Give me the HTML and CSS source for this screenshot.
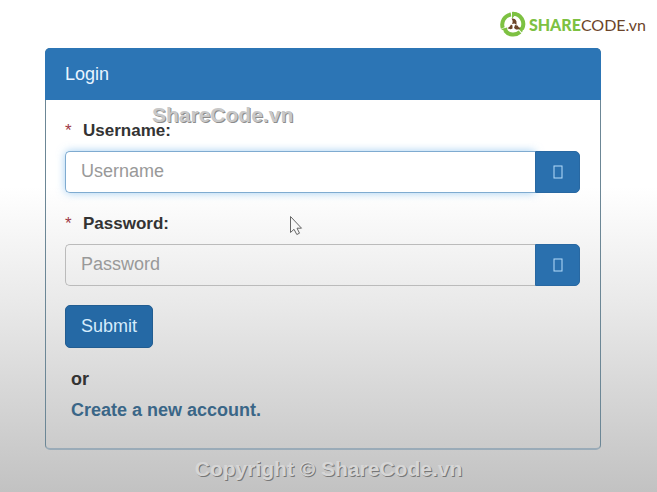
FILE: index.html
```html
<!DOCTYPE html>
<html lang="en">

<head>
    <meta charset="UTF-8">
    <meta name="viewport" content="width=device-width, initial-scale=1.0">
    <title>Login</title>
    <link rel="stylesheet" href="styles.css">
</head>

<body>
    <!-- Site Logo -->
    <header class="site-header">
        <a href="#" class="logo">
            <svg class="logo-mark" viewBox="0 0 26 26" aria-hidden="true">
                <g fill="none" stroke="#7dc142" stroke-width="4">
                    <path d="M2.800 17A10.300 10.300 0 0 1 11 3.500"/>
                    <path d="M13 2.800A10.300 10.300 0 0 1 22 18"/>
                    <path d="M20 21A10.300 10.300 0 0 1 5 19.500"/>
                </g>
                <path d="M12 .8l5 1-5 6zM24.500 14.500l-2.500 7-4-4zM1 18l6-1.500 1 6z" fill="#7dc142"/>
                <path d="M11.500 7.500q4-.5 5 3v3.500l-2-1.500-2.500.5q1.500-3-.5-5.500zM11 13.500l1.500 1v3q-2.500 1.500-5-.5 2.500-1 3.500-3.500zM15 14l2.500.5q1 2 3 2.500-1.500 2-4.500 1.500l-2-1.500z" fill="#6b4429"/>
            </svg>
            <span class="logo-text"><b>SHARE</b>CODE.vn</span>
        </a>
    </header>

    <main class="container">
        <!-- Login Panel -->
        <section class="panel">
            <h1 class="panel-heading">Login</h1>
            <form class="panel-body">
                <div class="form-group">
                    <label for="username"><span class="required">*</span>Username:</label>
                    <div class="input-group focused">
                        <input type="text" id="username" placeholder="Username">
                        <span class="addon"><svg viewBox="0 0 10 14"><rect x="1" y="1" width="8" height="12"/></svg></span>
                    </div>
                </div>
                <div class="form-group">
                    <label for="password"><span class="required">*</span>Password:</label>
                    <div class="input-group">
                        <input type="password" id="password" placeholder="Password">
                        <span class="addon"><svg viewBox="0 0 10 14"><rect x="1" y="1" width="8" height="12"/></svg></span>
                    </div>
                </div>
                <button type="submit" class="btn">Submit</button>
                <div class="register">
                    <p>or</p>
                    <a href="#">Create a new account.</a>
                </div>
            </form>
        </section>
        <span class="watermark stamp">ShareCode.vn</span>
        <svg class="pointer" viewBox="0 0 14 22" aria-hidden="true">
            <path d="M1.500 1.500v16l3.500-3.200 2.800 5.200 2.700-1.300-2.500-5h4.500z"/>
        </svg>
    </main>

    <footer class="watermark">Copyright © ShareCode.vn</footer>
</body>

</html>
```

FILE: styles.css
```css
/* General Styles */
* {
    margin: 0;
    padding: 0;
    box-sizing: border-box;
}

body {
    min-height: 100vh;
    font-family: "Liberation Sans", Arial, sans-serif;
    font-size: 18px;
    line-height: 22px;
    color: #333;
    background: linear-gradient(#fff 38%, #e9e9e9 62%, #c2c2c2 100%);
}

/* Logo */
.site-header {
    display: flex;
    justify-content: flex-end;
    height: 48px;
    padding: 11px 11px 0 0;
}

.logo {
    display: flex;
    align-items: flex-start;
    gap: 3px;
    color: #6b4429;
    text-decoration: none;
}

.logo-mark {
    width: 26px;
    height: 26px;
}

.logo-text {
    font-family: Lato, sans-serif;
    font-size: 16px;
    line-height: 28px;
    font-weight: 400;
}

.logo-text b {
    font-weight: 900;
    color: #7dc142;
}

/* Panel */
.container {
    position: relative;
    padding: 0 56px 0 45px;
}

.panel {
    border: 1px solid #6c8796;
    border-bottom: 2px solid #9aabb8;
    border-radius: 5px;
}

.panel-heading {
    margin: -1px -1px 0;
    padding: 15px 20px;
    font-size: 18px;
    font-weight: normal;
    color: #e8f4ff;
    background: #2c75b5;
    border-radius: 5px 5px 0 0;
}

.panel-body {
    padding: 20px 20px 27px 19px;
}

/* Form */
.form-group {
    margin-bottom: 20px;
}

.form-group + .form-group {
    margin-bottom: 19px;
}

label {
    display: block;
    margin-bottom: 9px;
    font-size: 17px;
    font-weight: bold;
}

.required {
    display: inline-block;
    width: 18px;
    font-weight: normal;
    color: #a03a48;
}

.input-group {
    display: flex;
    height: 42px;
    border-radius: 5px;
}

.input-group input {
    flex: 1;
    min-width: 0;
    padding: 0 15px 2px;
    font: inherit;
    color: #555;
    background: transparent;
    border: 1px solid #bbb;
    border-right: none;
    border-radius: 5px 0 0 5px;
    outline: none;
}

.input-group input::placeholder {
    color: #999;
}

.focused input {
    background: #fff;
    border-color: #7fabd0;
    box-shadow: 0 0 8px rgba(102, 175, 233, 0.6);
}

.addon {
    position: relative;
    display: flex;
    align-items: center;
    justify-content: center;
    width: 45px;
    background: #2a70ae;
    border: 1px solid #2868a2;
    border-radius: 0 5px 5px 0;
}

.addon svg {
    width: 10px;
    height: 14px;
    fill: none;
    stroke: #b5dcfa;
}

.btn {
    display: block;
    height: 43px;
    padding: 0 15px 2px;
    font: inherit;
    color: #d5ecfc;
    background: #2569a5;
    border: 1px solid #225d91;
    border-radius: 5px;
    cursor: pointer;
}

.register {
    display: flex;
    flex-direction: column;
    align-items: flex-start;
    gap: 9px;
    padding: 20px 6px 0;
    font-weight: bold;
}

.register a {
    color: #3a6687;
    text-decoration: none;
}

.register a:hover {
    text-decoration: underline;
}

/* Watermarks */
.watermark {
    font-size: 21px;
    font-weight: bold;
    text-align: center;
    color: #d6d6d6;
    text-shadow: 1px 1px 0 #777;
}

footer.watermark {
    padding: 8px 0 0;
}

.stamp {
    position: absolute;
    top: 56px;
    left: 152px;
    color: #c8c8c8;
    text-shadow: 1px 1px 0 #8c8c8c;
}

/* Mouse Pointer */
.pointer {
    position: absolute;
    top: 167px;
    left: 289px;
    width: 14px;
    height: 22px;
    fill: #f8f8f8;
    stroke: #666;
}
```
